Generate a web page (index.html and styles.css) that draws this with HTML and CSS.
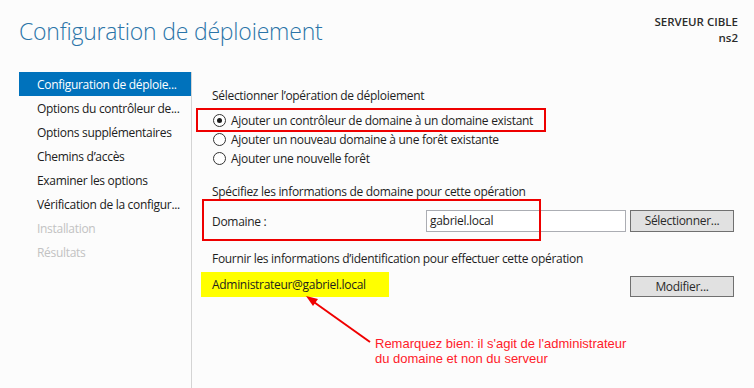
FILE: index.html
```html
<!DOCTYPE html>
<html lang="fr">
<head>
<meta charset="utf-8">
<link rel="stylesheet" href="styles.css">
</head>
<body>
<div class="page">
  <header class="header">
    <h1 class="title">Configuration de déploiement</h1>
    <div class="target">
      <div class="target-label">SERVEUR CIBLE</div>
      <div class="target-name">ns2</div>
    </div>
  </header>
  <div class="main">
    <nav class="nav">
      <div class="nav-item active">Configuration de déploie...</div>
      <div class="nav-item">Options du contrôleur de...</div>
      <div class="nav-item">Options supplémentaires</div>
      <div class="nav-item">Chemins d’accès</div>
      <div class="nav-item">Examiner les options</div>
      <div class="nav-item">Vérification de la configur...</div>
      <div class="nav-item disabled">Installation</div>
      <div class="nav-item disabled">Résultats</div>
    </nav>
    <section class="content">
      <div class="label first">Sélectionner l’opération de déploiement</div>
      <div class="radios">
        <div class="radio-row"><span class="radio checked"></span>Ajouter un contrôleur de domaine à un domaine existant</div>
        <div class="radio-row"><span class="radio"></span>Ajouter un nouveau domaine à une forêt existante</div>
        <div class="radio-row"><span class="radio"></span>Ajouter une nouvelle forêt</div>
      </div>
      <div class="label second">Spécifiez les informations de domaine pour cette opération</div>
      <div class="domain-row">
        <span class="domain-label">Domaine :</span>
        <span class="input">gabriel.local</span>
        <span class="button">Sélectionner...</span>
      </div>
      <div class="label third">Fournir les informations d’identification pour effectuer cette opération</div>
      <div class="cred-row">
        <span class="cred">Administrateur@gabriel.local</span>
        <span class="button cred-button">Modifier...</span>
      </div>
    </section>
  </div>

  <div class="mark mark-op"></div>
  <div class="mark mark-domain"></div>
  <svg class="arrow" width="754" height="388" viewBox="0 0 754 388">
    <line x1="370" y1="342" x2="311" y2="300" stroke="#f00000" stroke-width="2"/>
    <polygon points="306,296 318,299 313,306" fill="#f00000"/>
  </svg>
  <div class="note">Remarquez bien: il s'agit de l'administrateur<br>du domaine et non du serveur</div>
</div>
</body>
</html>
```
FILE: styles.css
```css
* { box-sizing: border-box; }
html, body {
  margin: 0;
  padding: 0;
  background: #fcfcfc;
}
.page {
  position: relative;
  width: 754px;
  height: 388px;
  overflow: hidden;
  font-family: "Open Sans", "Noto Sans", sans-serif;
  font-size: 12px;
  letter-spacing: -0.3px;
  color: #1e1e1e;
}
.header {
  display: flex;
  justify-content: space-between;
  padding: 14px 16px 0 19px;
  height: 72px;
}
.title {
  margin: 0;
  font-weight: 300;
  font-size: 23px;
  line-height: 34px;
  color: #2a74a8;
  letter-spacing: -0.2px;
}
.target {
  text-align: right;
  font-size: 11.5px;
  line-height: 16px;
  font-weight: 600;
  color: #2b2b2b;
  letter-spacing: 0;
}
.main {
  display: flex;
  height: 316px;
}
.nav {
  padding-left: 19px;
  border-right: 1px solid #d4d4d4;
  flex: none;
  box-sizing: content-box;
  width: 172px;
}
.nav-item {
  height: 24px;
  line-height: 25px;
  padding-left: 18px;
  white-space: nowrap;
  overflow: hidden;
  color: #202020;
}
.nav-item.active {
  background: #0072bc;
  color: #ffffff;
}
.nav-item.disabled {
  color: #c2c2c2;
}
.content {
  flex: 1;
  padding-left: 20px;
  padding-right: 20px;
}
.label {
  line-height: 16px;
  white-space: nowrap;
}
.label.first { margin-top: 16px; }
.radios { margin-top: 7px; }
.radio-row {
  display: flex;
  align-items: center;
  height: 19px;
  white-space: nowrap;
}
.radio {
  width: 13px;
  height: 13px;
  border: 1px solid #333;
  border-radius: 50%;
  background: #fff;
  margin-left: 1px;
  margin-right: 5px;
  display: flex;
  align-items: center;
  justify-content: center;
  flex: none;
}
.radio.checked::after {
  content: "";
  width: 5px;
  height: 5px;
  border-radius: 50%;
  background: #1a1a1a;
}
.label.second { margin-top: 16px; }
.domain-row {
  display: flex;
  align-items: center;
  margin-top: 10px;
  height: 22px;
}
.domain-label {
  width: 214px;
  flex: none;
}
.input {
  width: 200px;
  height: 22px;
  border: 1px solid #abadb3;
  background: #fff;
  line-height: 20px;
  padding-left: 3px;
  flex: none;
}
.button {
  width: 104px;
  height: 22px;
  margin-left: 4px;
  border: 1px solid #707070;
  background: #e1e1e1;
  text-align: center;
  line-height: 20px;
  color: #2a2a2a;
  flex: none;
}
.label.third { margin-top: 19px; }
.cred-row {
  display: flex;
  align-items: flex-start;
  margin-top: 5px;
}
.cred {
  width: 188px;
  height: 25px;
  line-height: 25px;
  margin-left: -11px;
  padding-left: 11px;
  background: #ffff00;
  white-space: nowrap;
  flex: none;
}
.cred-button {
  margin-left: 241px;
  margin-top: 4px;
  height: 21px;
}
.mark {
  position: absolute;
  border: 2px solid #ee0000;
}
.mark-op {
  left: 196px;
  top: 108px;
  width: 350px;
  height: 24px;
}
.mark-domain {
  left: 202px;
  top: 199px;
  width: 339px;
  height: 42px;
}
.arrow {
  position: absolute;
  left: 0;
  top: 0;
}
.note {
  position: absolute;
  left: 375px;
  top: 336px;
  font-family: "Liberation Sans", Arial, sans-serif;
  font-size: 13px;
  line-height: 15px;
  letter-spacing: 0;
  color: #ff1a2a;
}
```
